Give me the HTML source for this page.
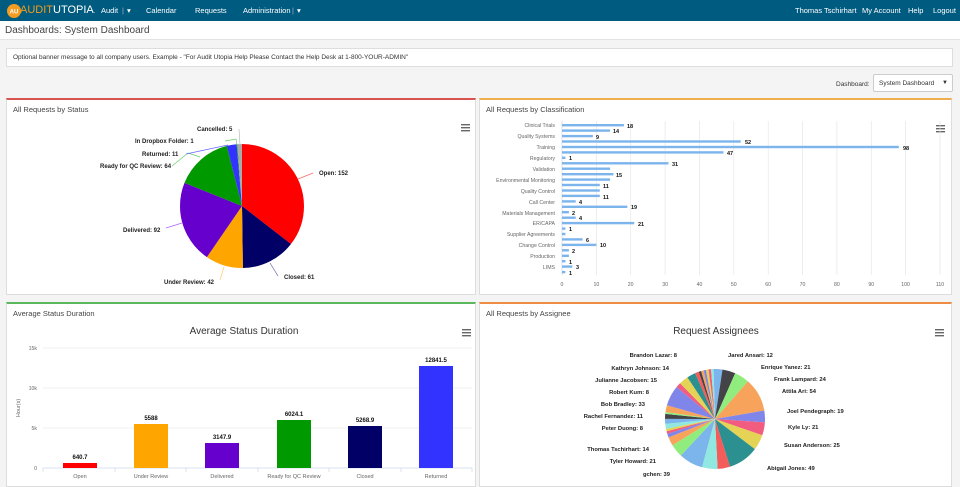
<!DOCTYPE html>
<html><head><meta charset="utf-8"><style>
*{box-sizing:border-box;margin:0;padding:0}
body{width:960px;height:481px;overflow:hidden;background:#f4f4f4;font-family:"Liberation Sans",sans-serif;position:relative}
.nav{position:absolute;left:0;top:0;width:960px;height:21px;background:#005b80;color:#fff;font-size:7.5px}
.nav span{position:absolute;top:6px}
.tb{position:absolute;left:0;top:21px;width:960px;height:19px;background:#fff;border-bottom:1px solid #e3e3e3}
.tb div{position:absolute;left:5px;top:4px;font-size:10px;color:#444}
.banner{position:absolute;left:6px;top:48px;width:947px;height:19px;background:#fff;border:1px solid #ddd;font-size:6.5px;color:#333;padding:5px 6px}
.panel{position:absolute;background:#fff;border:1px solid #ddd}
.panel .h{position:absolute;left:6px;top:5px;font-size:7.5px;color:#444}
.dash{position:absolute;left:836px;top:81px;font-size:6.5px;color:#333}
.sel{position:absolute;left:873px;top:74px;width:80px;height:18px;border:1px solid #ccc;background:#fff;font-size:6.5px;padding:5px 5px;color:#333;border-radius:2px}
svg{position:absolute;left:0;top:0}
svg text{font-family:"Liberation Sans",sans-serif}
</style></head><body>
<div class="nav">
<svg width="20" height="20" style="left:4px;top:1px"><circle cx="10" cy="10" r="7" fill="#f39c1f"/><text x="10" y="12.5" font-size="6" fill="#fff" text-anchor="middle" font-weight="bold">AU</text></svg>
<span style="left:20px;top:4px;font-size:11px;color:#f39c1f">AUDIT<b style="font-weight:normal;color:#fff">UTOPIA</b><small style="font-size:5px;color:#fff">.</small></span>
<span style="left:101px">Audit</span><span style="left:122px;color:#aac">|</span><span style="left:127px">▾</span>
<span style="left:146px">Calendar</span><span style="left:195px">Requests</span><span style="left:243px">Administration</span><span style="left:292px;color:#aac">|</span><span style="left:297px">▾</span>
<span style="left:795px">Thomas Tschirhart</span><span style="left:862px">My Account</span><span style="left:908px">Help</span><span style="left:933px">Logout</span>
</div>
<div class="tb"><div>Dashboards: System Dashboard</div></div>
<div class="banner">Optional banner message to all company users. Example - "For Audit Utopia Help Please Contact the Help Desk at 1-800-YOUR-ADMIN"</div>
<div class="dash">Dashboard:</div><div class="sel">System Dashboard<span style="position:absolute;right:4px;font-size:6px">▼</span></div>
<div class="panel" style="left:6px;top:98px;width:470px;height:197px;border-top:2px solid #d9534f"><div class="h">All Requests by Status</div></div>
<div class="panel" style="left:479px;top:98px;width:473px;height:197px;border-top:2px solid #f0ad4e"><div class="h">All Requests by Classification</div></div>
<div class="panel" style="left:6px;top:302px;width:470px;height:185px;border-top:2px solid #5cb85c"><div class="h">Average Status Duration</div></div>
<div class="panel" style="left:479px;top:302px;width:473px;height:185px;border-top:2px solid #ef8c43"><div class="h">All Requests by Assignee</div></div>

<svg width="960" height="481" viewBox="0 0 960 481">
<!-- hamburger icons -->
<g fill="#666"><rect x="461" y="124" width="9" height="1.4"/><rect x="461" y="127" width="9" height="1.4"/><rect x="461" y="130" width="9" height="1.4"/></g>
<g fill="#666"><rect x="936" y="125" width="9" height="1.4"/><rect x="936" y="128" width="9" height="1.4"/><rect x="936" y="131" width="9" height="1.4"/></g>
<g fill="#666"><rect x="462" y="329" width="9" height="1.4"/><rect x="462" y="332" width="9" height="1.4"/><rect x="462" y="335" width="9" height="1.4"/></g>
<g fill="#666"><rect x="935" y="329" width="9" height="1.4"/><rect x="935" y="332" width="9" height="1.4"/><rect x="935" y="335" width="9" height="1.4"/></g>

<!-- status pie -->
<g transform="rotate(-90 242 206)" fill="none" stroke-width="62">
<circle cx="242" cy="206" r="31" pathLength="428" stroke="#ff0000" stroke-dasharray="152 276" stroke-dashoffset="0"/>
<circle cx="242" cy="206" r="31" pathLength="428" stroke="#000066" stroke-dasharray="61 367" stroke-dashoffset="-152"/>
<circle cx="242" cy="206" r="31" pathLength="428" stroke="#ffa500" stroke-dasharray="42 386" stroke-dashoffset="-213"/>
<circle cx="242" cy="206" r="31" pathLength="428" stroke="#6600cc" stroke-dasharray="92 336" stroke-dashoffset="-255"/>
<circle cx="242" cy="206" r="31" pathLength="428" stroke="#009900" stroke-dasharray="64 364" stroke-dashoffset="-347"/>
<circle cx="242" cy="206" r="31" pathLength="428" stroke="#3333ff" stroke-dasharray="11 417" stroke-dashoffset="-411"/>
<circle cx="242" cy="206" r="31" pathLength="428" stroke="#33aa33" stroke-dasharray="1 427" stroke-dashoffset="-422"/>
<circle cx="242" cy="206" r="31" pathLength="428" stroke="#aaaaaa" stroke-dasharray="5 423" stroke-dashoffset="-423"/>
</g>
<g fill="none" stroke-width="0.7">
<path d="M298 179 L313 173" stroke="#f66"/><path d="M270 263 L278 276" stroke="#66a"/><path d="M224 267 L220 280" stroke="#fc6"/>
<path d="M182 223 L166 228" stroke="#a6f"/><path d="M200 157 L188 153 L172 166" stroke="#6c6"/><path d="M228 145 L186 154" stroke="#66f"/>
<path d="M237 145 L236 139 L225 141" stroke="#6c6"/><path d="M240 145 L239 129" stroke="#bbb"/>
</g>
<g font-size="6" font-weight="bold" fill="#222">
<text x="319" y="175">Open: 152</text><text x="284" y="279">Closed: 61</text><text x="164" y="284">Under Review: 42</text>
<text x="123" y="232">Delivered: 92</text><text x="100" y="168">Ready for QC Review: 64</text><text x="142" y="156">Returned: 11</text>
<text x="135" y="143">In Dropbox Folder: 1</text><text x="197" y="131">Cancelled: 5</text>
</g>

<!-- classification bars -->
<g stroke="#e6e6e6" stroke-width="0.7">
<line x1="596.4" y1="121" x2="596.4" y2="275"/><line x1="630.7" y1="121" x2="630.7" y2="275"/><line x1="665.1" y1="121" x2="665.1" y2="275"/><line x1="699.5" y1="121" x2="699.5" y2="275"/><line x1="733.8" y1="121" x2="733.8" y2="275"/><line x1="768.2" y1="121" x2="768.2" y2="275"/><line x1="802.5" y1="121" x2="802.5" y2="275"/><line x1="836.9" y1="121" x2="836.9" y2="275"/><line x1="871.3" y1="121" x2="871.3" y2="275"/><line x1="905.6" y1="121" x2="905.6" y2="275"/><line x1="940" y1="121" x2="940" y2="275"/>
</g>
<line x1="562" y1="121" x2="562" y2="275" stroke="#ccd6eb" stroke-width="0.7"/>
<g fill="#7cb5ec" id="bars"></g>
<g font-size="5.2" fill="#666" text-anchor="end">
<text x="555" y="127">Clinical Trials</text><text x="555" y="138">Quality Systems</text><text x="555" y="149">Training</text><text x="555" y="160">Regulatory</text><text x="555" y="171">Validation</text><text x="555" y="182">Environmental Monitoring</text><text x="555" y="193">Quality Control</text><text x="555" y="204">Call Center</text><text x="555" y="215">Materials Management</text><text x="555" y="225">ER/CAPA</text><text x="555" y="236">Supplier Agreements</text><text x="555" y="247">Change Control</text><text x="555" y="258">Production</text><text x="555" y="269">LIMS</text>
</g>
<g font-size="5.2" fill="#666" text-anchor="middle">
<text x="562" y="286">0</text><text x="596.4" y="286">10</text><text x="630.7" y="286">20</text><text x="665.1" y="286">30</text><text x="699.5" y="286">40</text><text x="733.8" y="286">50</text><text x="768.2" y="286">60</text><text x="802.5" y="286">70</text><text x="836.9" y="286">80</text><text x="871.3" y="286">90</text><text x="905.6" y="286">100</text><text x="940" y="286">110</text>
</g>
<g fill="#7cb5ec">
<rect x="562" y="124" width="61.9" height="2.4"/><rect x="562" y="129.4" width="48.1" height="2.4"/><rect x="562" y="134.9" width="30.9" height="2.4"/><rect x="562" y="140.3" width="178.7" height="2.4"/><rect x="562" y="145.8" width="336.8" height="2.4"/><rect x="562" y="151.2" width="161.5" height="2.4"/><rect x="562" y="156.6" width="3.4" height="2.4"/><rect x="562" y="162.1" width="106.5" height="2.4"/><rect x="562" y="167.5" width="48.1" height="2.4"/><rect x="562" y="173" width="51.5" height="2.4"/><rect x="562" y="178.4" width="48.1" height="2.4"/><rect x="562" y="183.8" width="37.8" height="2.4"/><rect x="562" y="189.3" width="37.8" height="2.4"/><rect x="562" y="194.7" width="37.8" height="2.4"/><rect x="562" y="200.2" width="13.7" height="2.4"/><rect x="562" y="205.6" width="65.3" height="2.4"/><rect x="562" y="211" width="6.9" height="2.4"/><rect x="562" y="216.5" width="13.7" height="2.4"/><rect x="562" y="221.9" width="72.2" height="2.4"/><rect x="562" y="227.4" width="3.4" height="2.4"/><rect x="562" y="232.8" width="3.4" height="2.4"/><rect x="562" y="238.2" width="20.6" height="2.4"/><rect x="562" y="243.7" width="34.4" height="2.4"/><rect x="562" y="249.1" width="6.9" height="2.4"/><rect x="562" y="254.6" width="6.9" height="2.4"/><rect x="562" y="260" width="3.4" height="2.4"/><rect x="562" y="265.4" width="10.3" height="2.4"/><rect x="562" y="270.9" width="3.4" height="2.4"/>
</g>
<g font-size="5.5" font-weight="bold" fill="#111">
<text x="627" y="128">18</text><text x="613" y="133">14</text><text x="596" y="139">9</text><text x="745" y="144">52</text><text x="903" y="150">98</text><text x="727" y="155">47</text><text x="569" y="160">1</text><text x="672" y="166">31</text><text x="616" y="177">15</text><text x="603" y="188">11</text><text x="603" y="199">11</text><text x="579" y="204">4</text><text x="631" y="209">19</text><text x="572" y="215">2</text><text x="579" y="220">4</text><text x="638" y="226">21</text><text x="569" y="231">1</text><text x="586" y="242">6</text><text x="600" y="247">10</text><text x="572" y="253">2</text><text x="569" y="264">1</text><text x="576" y="269">3</text><text x="569" y="275">1</text>
</g>

<!-- average status duration -->
<text x="244" y="334" font-size="10" fill="#333" text-anchor="middle">Average Status Duration</text>
<g stroke="#eee" stroke-width="0.7"><line x1="43" y1="348" x2="472" y2="348"/><line x1="43" y1="388" x2="472" y2="388"/><line x1="43" y1="428" x2="472" y2="428"/></g>
<line x1="43" y1="468" x2="472" y2="468" stroke="#ccd6eb" stroke-width="0.8"/>
<g stroke="#ccd6eb" stroke-width="0.7"><line x1="43" y1="468" x2="43" y2="472"/><line x1="115" y1="468" x2="115" y2="472"/><line x1="186" y1="468" x2="186" y2="472"/><line x1="258" y1="468" x2="258" y2="472"/><line x1="329" y1="468" x2="329" y2="472"/><line x1="401" y1="468" x2="401" y2="472"/><line x1="472" y1="468" x2="472" y2="472"/></g>
<g font-size="5.2" fill="#666" text-anchor="end"><text x="37" y="350">15k</text><text x="37" y="390">10k</text><text x="37" y="430">5k</text><text x="37" y="470">0</text></g>
<text x="20" y="408" font-size="5.5" fill="#666" text-anchor="middle" transform="rotate(-90 20 408)">Hour(s)</text>
<rect x="63" y="463" width="34" height="5" fill="#ff0000"/>
<rect x="134" y="424" width="34" height="44" fill="#ffa500"/>
<rect x="205" y="443" width="34" height="25" fill="#6600cc"/>
<rect x="277" y="420" width="34" height="48" fill="#009900"/>
<rect x="348" y="426" width="34" height="42" fill="#000066"/>
<rect x="419" y="366" width="34" height="102" fill="#3333ff"/>
<g font-size="6" font-weight="bold" fill="#111" text-anchor="middle"><text x="80" y="459">640.7</text><text x="151" y="420">5588</text><text x="222" y="439">3147.9</text><text x="294" y="416">6024.1</text><text x="365" y="422">5268.9</text><text x="436" y="362">12841.5</text></g>
<g font-size="5.5" fill="#666" text-anchor="middle"><text x="80" y="478">Open</text><text x="151" y="478">Under Review</text><text x="222" y="478">Delivered</text><text x="294" y="478">Ready for QC Review</text><text x="365" y="478">Closed</text><text x="436" y="478">Returned</text></g>

<!-- assignee pie -->
<text x="716" y="334" font-size="10" fill="#333" text-anchor="middle">Request Assignees</text>
<g transform="rotate(-90 715 419)" fill="none" stroke-width="50">
<circle cx="715" cy="419" r="25" pathLength="496" stroke="#7cb5ec" stroke-dasharray="12 484" stroke-dashoffset="0"/>
<circle cx="715" cy="419" r="25" pathLength="496" stroke="#434348" stroke-dasharray="21 475" stroke-dashoffset="-12"/>
<circle cx="715" cy="419" r="25" pathLength="496" stroke="#90ed7d" stroke-dasharray="24 472" stroke-dashoffset="-33"/>
<circle cx="715" cy="419" r="25" pathLength="496" stroke="#f7a35c" stroke-dasharray="54 442" stroke-dashoffset="-57"/>
<circle cx="715" cy="419" r="25" pathLength="496" stroke="#8085e9" stroke-dasharray="19 477" stroke-dashoffset="-111"/>
<circle cx="715" cy="419" r="25" pathLength="496" stroke="#f15c80" stroke-dasharray="21 475" stroke-dashoffset="-130"/>
<circle cx="715" cy="419" r="25" pathLength="496" stroke="#e4d354" stroke-dasharray="25 471" stroke-dashoffset="-151"/>
<circle cx="715" cy="419" r="25" pathLength="496" stroke="#2b908f" stroke-dasharray="49 447" stroke-dashoffset="-176"/>
<circle cx="715" cy="419" r="25" pathLength="496" stroke="#f45b5b" stroke-dasharray="20 476" stroke-dashoffset="-225"/>
<circle cx="715" cy="419" r="25" pathLength="496" stroke="#91e8e1" stroke-dasharray="25 471" stroke-dashoffset="-245"/>
<circle cx="715" cy="419" r="25" pathLength="496" stroke="#7cb5ec" stroke-dasharray="39 457" stroke-dashoffset="-270"/>
<circle cx="715" cy="419" r="25" pathLength="496" stroke="#90ed7d" stroke-dasharray="21 475" stroke-dashoffset="-309"/>
<circle cx="715" cy="419" r="25" pathLength="496" stroke="#f7a35c" stroke-dasharray="14 482" stroke-dashoffset="-330"/>
<circle cx="715" cy="419" r="25" pathLength="496" stroke="#8085e9" stroke-dasharray="6 490" stroke-dashoffset="-344"/>
<circle cx="715" cy="419" r="25" pathLength="496" stroke="#f15c80" stroke-dasharray="4 492" stroke-dashoffset="-350"/>
<circle cx="715" cy="419" r="25" pathLength="496" stroke="#e4d354" stroke-dasharray="4 492" stroke-dashoffset="-354"/>
<circle cx="715" cy="419" r="25" pathLength="496" stroke="#91e8e1" stroke-dasharray="8 488" stroke-dashoffset="-358"/>
<circle cx="715" cy="419" r="25" pathLength="496" stroke="#7cb5ec" stroke-dasharray="8 488" stroke-dashoffset="-366"/>
<circle cx="715" cy="419" r="25" pathLength="496" stroke="#434348" stroke-dasharray="8 488" stroke-dashoffset="-374"/>
<circle cx="715" cy="419" r="25" pathLength="496" stroke="#90ed7d" stroke-dasharray="3 493" stroke-dashoffset="-382"/>
<circle cx="715" cy="419" r="25" pathLength="496" stroke="#f7a35c" stroke-dasharray="11 485" stroke-dashoffset="-385"/>
<circle cx="715" cy="419" r="25" pathLength="496" stroke="#8085e9" stroke-dasharray="33 463" stroke-dashoffset="-396"/>
<circle cx="715" cy="419" r="25" pathLength="496" stroke="#f15c80" stroke-dasharray="8 488" stroke-dashoffset="-429"/>
<circle cx="715" cy="419" r="25" pathLength="496" stroke="#e4d354" stroke-dasharray="15 481" stroke-dashoffset="-437"/>
<circle cx="715" cy="419" r="25" pathLength="496" stroke="#2b908f" stroke-dasharray="14 482" stroke-dashoffset="-452"/>
<circle cx="715" cy="419" r="25" pathLength="496" stroke="#f45b5b" stroke-dasharray="6 490" stroke-dashoffset="-466"/>
<circle cx="715" cy="419" r="25" pathLength="496" stroke="#434348" stroke-dasharray="4 492" stroke-dashoffset="-472"/>
<circle cx="715" cy="419" r="25" pathLength="496" stroke="#f7a35c" stroke-dasharray="4 492" stroke-dashoffset="-476"/>
<circle cx="715" cy="419" r="25" pathLength="496" stroke="#8085e9" stroke-dasharray="4 492" stroke-dashoffset="-480"/>
<circle cx="715" cy="419" r="25" pathLength="496" stroke="#e4d354" stroke-dasharray="4 492" stroke-dashoffset="-484"/>
<circle cx="715" cy="419" r="25" pathLength="496" stroke="#f15c80" stroke-dasharray="4 492" stroke-dashoffset="-488"/>
<circle cx="715" cy="419" r="25" pathLength="496" stroke="#91e8e1" stroke-dasharray="4 492" stroke-dashoffset="-492"/>
</g>
<g font-size="5.8" font-weight="bold" fill="#222">
<text x="728" y="357">Jared Ansari: 12</text><text x="761" y="369">Enrique Yanez: 21</text><text x="774" y="381">Frank Lampard: 24</text><text x="782" y="393">Attila Ari: 54</text>
<text x="787" y="413">Joel Pendegraph: 19</text><text x="788" y="429">Kyle Ly: 21</text><text x="784" y="447">Susan Anderson: 25</text><text x="767" y="470">Abigail Jones: 49</text>
<g text-anchor="end"><text x="677" y="357">Brandon Lazar: 8</text><text x="669" y="370">Kathryn Johnson: 14</text><text x="657" y="382">Julianne Jacobsen: 15</text><text x="649" y="394">Robert Kum: 8</text><text x="645" y="406">Bob Bradley: 33</text><text x="643" y="418">Rachel Fernandez: 11</text><text x="643" y="430">Peter Duong: 8</text><text x="649" y="451">Thomas Tschirhart: 14</text><text x="656" y="463">Tyler Howard: 21</text><text x="670" y="476">gchen: 39</text></g>
</g>
</svg>
</body></html>
